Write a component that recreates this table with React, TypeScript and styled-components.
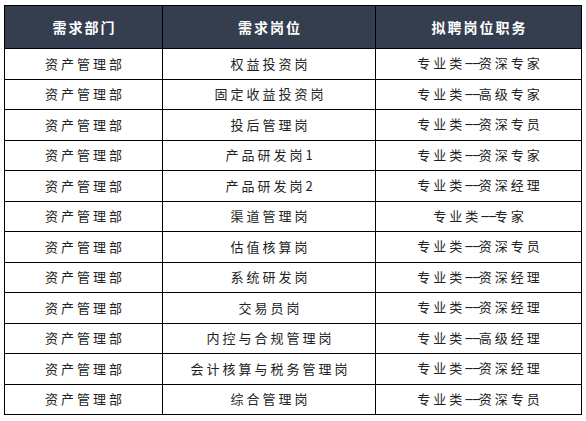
import React from "react";
import styled, { createGlobalStyle } from "styled-components";

const Global = createGlobalStyle`
  html, body { margin: 0; padding: 0; background: #ffffff; }
  body { font-family: "Noto Sans CJK SC", "Noto Sans", sans-serif; }
`;

const Page = styled.div`
  padding: 5px 0 0 4px;
`;

const Table = styled.table`
  border-collapse: collapse;
  table-layout: fixed;
  width: 577px;
`;

const Col = styled.col<{ $w: number }>`
  width: ${(p) => p.$w}px;
`;

const HeadRow = styled.tr`
  height: 43px;
  background: #343e4f;
`;

const HeadCell = styled.th`
  border: 1px solid #000;
  padding: 0 0 0 2px;
  color: #ffffff;
  font-size: 14px;
  font-weight: 700;
  letter-spacing: 2px;
  text-align: center;
  vertical-align: middle;
`;

const Row = styled.tr`
  height: 30.5px;
`;

const Cell = styled.td`
  border: 1px solid #000;
  padding: 0 0 0 3px;
  color: #222222;
  font-size: 13px;
  font-weight: 400;
  letter-spacing: 3px;
  line-height: 16px;
  text-align: center;
  vertical-align: middle;
  white-space: nowrap;
  overflow: hidden;
`;

const Dash = styled.span`
  display: inline-block;
  font-family: "Liberation Sans", Arial, sans-serif;
  font-size: 13px;
  letter-spacing: -1.1px;
  line-height: 16px;
  margin: 0 8px 0 -1px;
  transform: translateY(-1.5px) scaleX(2.3);
  transform-origin: left center;
  color: #222222;
`;

const rows: [string, string, string][] = [
  ["权益投资岗", "专业类", "资深专家"],
  ["固定收益投资岗", "专业类", "高级专家"],
  ["投后管理岗", "专业类", "资深专员"],
  ["产品研发岗1", "专业类", "资深专家"],
  ["产品研发岗2", "专业类", "资深经理"],
  ["渠道管理岗", "专业类", "专家"],
  ["估值核算岗", "专业类", "资深专员"],
  ["系统研发岗", "专业类", "资深经理"],
  ["交易员岗", "专业类", "资深经理"],
  ["内控与合规管理岗", "专业类", "高级经理"],
  ["会计核算与税务管理岗", "专业类", "资深经理"],
  ["综合管理岗", "专业类", "资深专员"],
];

export default function App() {
  return (
    <Page>
      <Global />
      <Table>
        <colgroup>
          <Col $w={158} />
          <Col $w={213} />
          <Col $w={206} />
        </colgroup>
        <thead>
          <HeadRow>
            <HeadCell>需求部门</HeadCell>
            <HeadCell>需求岗位</HeadCell>
            <HeadCell>拟聘岗位职务</HeadCell>
          </HeadRow>
        </thead>
        <tbody>
          {rows.map(([post, kind, level], i) => (
            <Row key={i}>
              <Cell>资产管理部</Cell>
              <Cell>{post}</Cell>
              <Cell>
                {kind}
                <Dash>--</Dash>
                {level}
              </Cell>
            </Row>
          ))}
        </tbody>
      </Table>
    </Page>
  );
}
